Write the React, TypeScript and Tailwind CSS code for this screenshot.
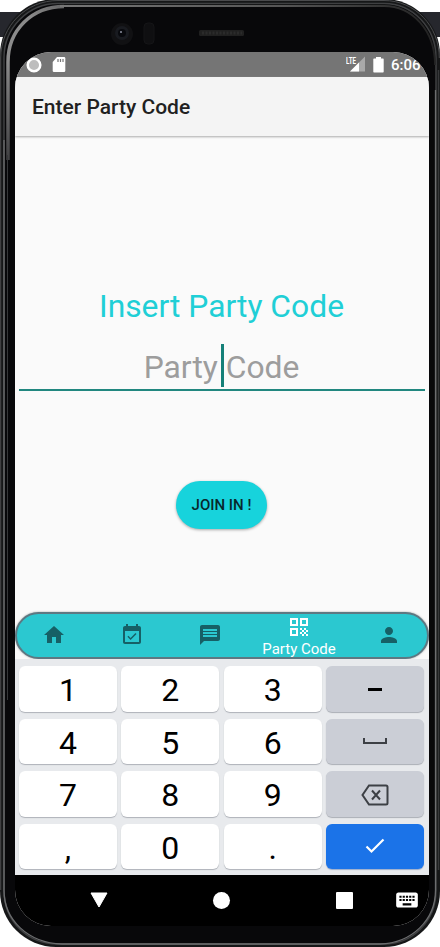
import React from "react";

const M = ({ d, className = "" }: { d: string; className?: string }) => (
  <svg viewBox="0 0 24 24" className={className} fill="currentColor"><path d={d} /></svg>
);

const HOME = "M10 20v-6h4v6h5v-8h3L12 3 2 12h3v8z";
const EVENT = "M16.53 11.06L15.47 10l-4.88 4.88-2.12-2.12-1.06 1.06L10.59 17l5.94-5.94zM19 3h-1V1h-2v2H8V1H6v2H5c-1.11 0-1.99.9-1.99 2L3 19c0 1.1.89 2 2 2h14c1.1 0 2-.9 2-2V5c0-1.1-.9-2-2-2zm0 16H5V8h14v11z";
const CHAT = "M20 2H4c-1.1 0-1.99.9-1.99 2L2 22l4-4h14c1.1 0 2-.9 2-2V4c0-1.1-.9-2-2-2zM5 6h14v2H5V6zm0 3h14v2H5V9zm0 5v-2h14v2H5z";
const QR = "M3 11h8V3H3v8zm2-6h4v4H5V5zM3 21h8v-8H3v8zm2-6h4v4H5v-4zM13 3v8h8V3h-8zm6 6h-4V5h4v4zM19 19h2v2h-2zM13 13h2v2h-2zM15 15h2v2h-2zM13 17h2v2h-2zM15 19h2v2h-2zM17 17h2v2h-2zM17 13h2v2h-2zM19 15h2v2h-2z";
const PERSON = "M12 12c2.21 0 4-1.79 4-4s-1.79-4-4-4-4 1.79-4 4 1.79 4 4 4zm0 2c-2.67 0-8 1.34-8 4v2h16v-2c0-2.66-5.33-4-8-4z";
const BOARD = "M20 5H4c-1.1 0-1.99.9-1.99 2L2 17c0 1.1.9 2 2 2h16c1.1 0 2-.9 2-2V7c0-1.1-.9-2-2-2zm-9 3h2v2h-2V8zm0 3h2v2h-2v-2zM8 8h2v2H8V8zm0 3h2v2H8v-2zm-1 2H5v-2h2v2zm0-3H5V8h2v2zm9 7H8v-2h8v2zm0-4h-2v-2h2v2zm0-3h-2V8h2v2zm3 3h-2v-2h2v2zm0-3h-2V8h2v2z";

function Frame() {
  return (
    <svg className="absolute inset-0" width="440" height="947" viewBox="0 0 440 947">
      <defs>
        <linearGradient id="corner" gradientUnits="userSpaceOnUse" x1="0" y1="160" x2="110" y2="0">
          <stop offset="0" stopColor="#3c3c3e" /><stop offset=".45" stopColor="#8c8c8c" /><stop offset=".7" stopColor="#8a8a8a" /><stop offset="1" stopColor="#3c3c3e" />
        </linearGradient>
        <linearGradient id="top" x1="0" y1="0" x2="1" y2="0">
          <stop offset="0" stopColor="#777" /><stop offset=".6" stopColor="#555" /><stop offset="1" stopColor="#222" />
        </linearGradient>
      </defs>
      <path d="M0 12H60V37H0zM380 12H440V37H380z" fill="#26272d" />
      <rect x="0" y="-1" width="440" height="948" rx="56" fill="#161718" />
      <path d="M.7 890V58C.7 26 26 .5 58 .5H384C415 .5 439.300 26 439.300 58" fill="none" stroke="#4a4b4d" strokeWidth="1" />
      <path d="M4 890V58C4 28 28 3.500 58 3.500H384C413 3.500 436 28 436 58V890C436 922 412 944 384 944H58C28 944 4 922 4 890" fill="#08080a" stroke="#3f4042" strokeWidth="1.500" />
      <path d="M4 140V890C4 920 28 943 62 944H380C412 943 435.500 920 435.500 890V90" fill="none" stroke="#6c6d6f" strokeWidth="1.300" />
      <path d="M8 160V62C8 30 32 6.500 64 6.500" fill="none" stroke="url(#corner)" strokeWidth="3.500" />
      <path d="M60 6H384C412 6 435 30 435 65" fill="none" stroke="url(#top)" strokeWidth="1.800" />
      <path d="M7.500 155V700" stroke="#37383a" strokeWidth="1" />
      <path d="M438.500 70V870" stroke="#37383a" strokeWidth="1.500" />
      <circle cx="122" cy="34" r="11" fill="#111113" />
      <circle cx="122" cy="33" r="7" fill="#191b20" />
      <circle cx="122" cy="33" r="4" fill="#08090d" />
      <circle cx="121" cy="32" r="1" fill="#8d91a0" />
      <rect x="144" y="23" width="10" height="21" rx="4" fill="#0f0f11" stroke="#151517" />
      <rect x="199" y="30" width="45" height="6" rx="1.5" fill="#202020" />
      <path d="M202 33H242" stroke="#2b2b2b" strokeWidth="3" strokeDasharray="2 1.5" />
    </svg>
  );
}

function StatusBar() {
  return (
    <div className="flex h-[25px] shrink-0 items-center bg-[#757575] pl-[11px] text-white">
      <svg width="16" height="16" viewBox="0 0 16 16"><circle cx="8" cy="8" r="6.3" fill="#bdbdbd" stroke="white" strokeWidth="2.5" /></svg>
      <svg className="ml-[10px]" width="14" height="16" viewBox="0 0 14 16"><path d="M5 0h7q1.3 0 1.3 1.3v12.4q0 1.3-1.3 1.3H2Q.7 15 .7 13.700V5z" fill="white" /><path d="M6 2v3M8.500 2v3M11 2v3" stroke="#757575" strokeWidth="1.200" /></svg>
      <svg className="ml-[280px]" width="20" height="17" viewBox="0 0 20 17">
        <path d="M19 0.500v15H4z" fill="#a9a9a9" /><path d="M13 6.500v9H4z" fill="white" />
        <text x="0" y="7.500" fontSize="9" fontWeight="700" fill="white" textLength="10" lengthAdjust="spacingAndGlyphs">LTE</text>
      </svg>
      <svg className="ml-[7px]" width="11" height="16" viewBox="0 0 11 16"><path d="M3 0h5v1.500h2q.7 0 .7.700v12.600q0 .700-.700.700H1q-.700 0-.700-.700V2.200Q.300 1.500 1 1.500h2z" fill="white" /></svg>
      <span className="ml-[7px] whitespace-nowrap pt-[1px] text-[15px] font-medium leading-[25px]">6:06</span>
    </div>
  );
}

function BottomTabs() {
  return (
    <div className="flex h-[47px] shrink-0 items-center rounded-full border-2 border-[#5d7882] bg-[#2bc8d0] text-[#166066] shadow-[0_0_2px_#999]">
      <div className="flex w-[74px] justify-center pb-px"><M d={HOME} className="h-6 w-6" /></div>
      <div className="flex w-[82px] justify-center pb-px"><M d={EVENT} className="h-6 w-6" /></div>
      <div className="flex w-[74px] justify-center pb-px"><M d={CHAT} className="h-6 w-6" /></div>
      <div className="flex w-[104px] flex-col items-center text-white">
        <M d={QR} className="h-6 w-6" />
        <span className="h-[18px] whitespace-nowrap text-[15px] leading-[20px]">Party Code</span>
      </div>
      <div className="flex w-[75px] justify-center pb-px"><M d={PERSON} className="h-6 w-6" /></div>
    </div>
  );
}

const digit = "flex items-center justify-center rounded-[6px] bg-white pt-[3px] text-[32px] leading-none text-black shadow-[0_1px_1px_#aeb2b8]";
const special = "flex items-center justify-center rounded-[6px] bg-[#cbced6] text-[#3d4045] shadow-[0_1px_1px_#aaaeb5]";

function Keyboard() {
  return (
    <div className="grid h-[216px] shrink-0 grid-cols-4 grid-rows-4 gap-x-[4.500px] gap-y-[7px] bg-[#e8eaed] pb-[6px] pl-[4px] pr-[5px] pt-[7px]">
      <div className={digit}>1</div><div className={digit}>2</div><div className={digit}>3</div>
      <div className={special}><span className="mt-[2px] h-[3px] w-[14px] bg-black" /></div>
      <div className={digit}>4</div><div className={digit}>5</div><div className={digit}>6</div>
      <div className={special}><svg width="24" height="8" viewBox="0 0 24 8"><path d="M1 1v5h22V1" fill="none" stroke="currentColor" strokeWidth="2" /></svg></div>
      <div className={digit}>7</div><div className={digit}>8</div><div className={digit}>9</div>
      <div className={special}><svg className="mt-[2px]" width="28" height="22" viewBox="0 0 28 22"><path d="M8 1.500h17q1.500 0 1.500 1.500v16q0 1.500-1.500 1.500H8L1.500 11zM11 6.500l8 9M19 6.500l-8 9" fill="none" stroke="currentColor" strokeWidth="2" /></svg></div>
      <div className={digit}>,</div><div className={digit}>0</div><div className={digit}>.</div>
      <div className="flex items-center justify-center rounded-[6px] bg-[#1b73e8] text-white shadow-[0_1px_1px_#9aaccc]"><svg width="20" height="16" viewBox="0 0 20 16"><path d="M1.500 8.500l5 5L18.500 1.500" fill="none" stroke="currentColor" strokeWidth="2.200" /></svg></div>
    </div>
  );
}

export default function App() {
  return (
    <div className="relative h-[947px] w-[440px] overflow-hidden bg-white font-['Roboto',sans-serif]">
      <Frame />
      <div className="relative ml-[15px] flex h-[926px] w-[414px] flex-col pt-[52px]">
        <div className="flex flex-1 flex-col overflow-hidden rounded-[36px] bg-[#fafafa]">
          <StatusBar />
          <header className="flex h-[59px] shrink-0 items-center bg-[#f4f4f4] pl-[17px] pt-[3px] text-[21px] font-medium text-[#212121] shadow-[0_1px_2px_#aaa]">Enter Party Code</header>
          <main className="flex flex-1 flex-col items-center">
            <h1 className="mr-px mt-[151px] whitespace-nowrap text-[31.800px] leading-[38px] text-[#20cfd6]">Insert Party Code</h1>
            <div className="relative mr-px mt-[16px] h-[50px] w-[406px] border-b-2 border-[#21877f] text-center text-[31.800px] leading-[52px] text-[#9d9d9d]">
              Party Code
              <span className="absolute left-[202px] top-[3px] h-[43px] w-[3px] bg-[#158078]" />
            </div>
            <button className="mr-px mt-[90px] flex h-[48px] w-[91px] items-center justify-center rounded-full bg-[#17d3dc] pt-[1px] text-[15px] font-medium text-[#08282c] shadow-[0_1px_3px_#0005]">JOIN IN !</button>
          </main>
          <BottomTabs />
          <Keyboard />
          <nav className="flex h-[51px] shrink-0 items-center bg-black pb-[1px] text-white">
            <svg className="ml-[75px]" width="18" height="16" viewBox="0 0 18 16"><path d="M1 1h16L9 15z" fill="currentColor" stroke="currentColor" strokeLinejoin="round" /></svg>
            <span className="ml-[105px] h-[17px] w-[17px] rounded-full bg-white" />
            <span className="ml-[106px] h-[17px] w-[17px] rounded-[1px] bg-white" />
            <M d={BOARD} className="ml-[41px] h-[26px] w-[26px]" />
          </nav>
        </div>
      </div>
    </div>
  );
}
